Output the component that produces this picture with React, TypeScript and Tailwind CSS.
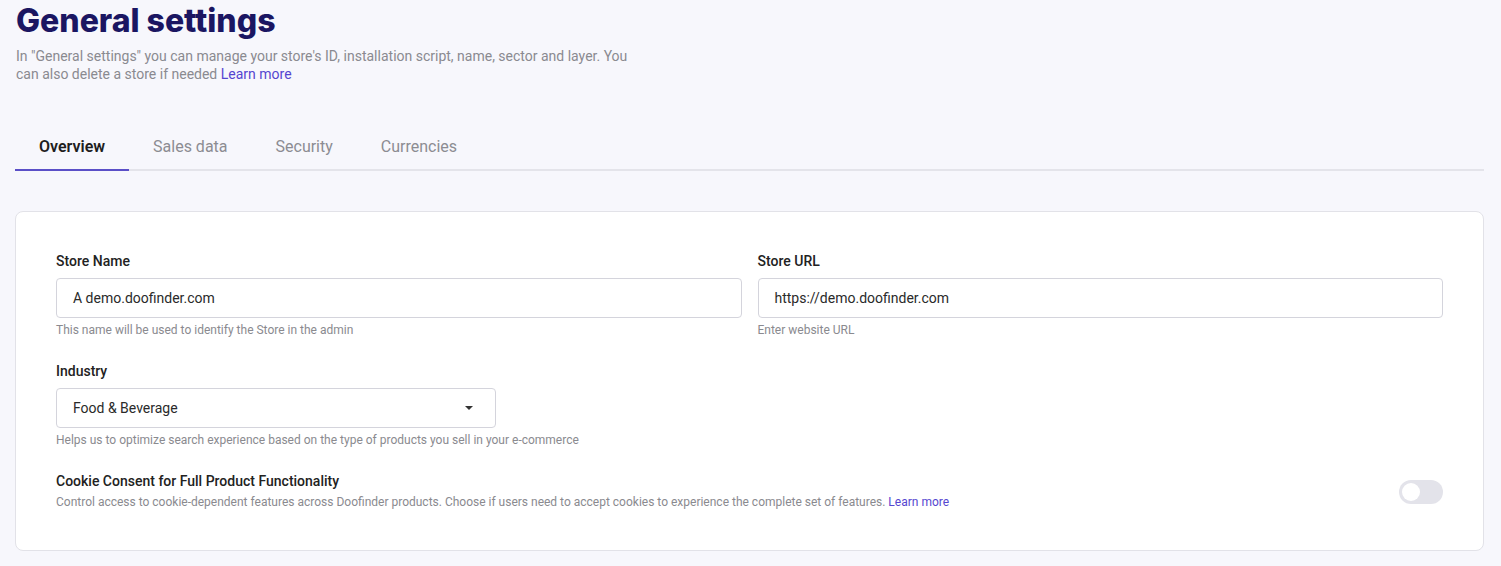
import React, { useState } from 'react';

const tabs = ['Overview', 'Sales data', 'Security', 'Currencies'];

const Field: React.FC<{ label: string; value: string; help: string }> = ({ label, value, help }) => (
  <div className="flex-1">
    <label className="block text-sm font-medium text-[#222] leading-5 mb-[7px]">{label}</label>
    <div className="h-10 border border-[#d4d4dc] rounded-[4px] flex items-center px-4 text-sm text-[#2a2a2a] bg-white">
      {value}
    </div>
    <p className="text-xs text-[#8a8a8f] mt-[4px] leading-4">{help}</p>
  </div>
);

export default function App() {
  const [active, setActive] = useState(0);
  const [cookies, setCookies] = useState(false);

  return (
    <div className="min-h-[566px] bg-[#f7f7fc] font-['Roboto',sans-serif] pl-[15px] pr-[17px] pt-[2px]">
      <h1 className="text-[32px] leading-[38px] font-extrabold text-[#1b1662] font-['Inter',sans-serif] pl-px">
        General settings
      </h1>
      <p className="text-sm leading-[18px] text-[#8a8a90] max-w-[625px] mt-[7px] pl-px">
        In "General settings" you can manage your store's ID, installation script, name, sector and layer. You can also delete a store if needed{' '}
        <a className="text-[#5546d0]">Learn more</a>
      </p>

      <div className="mt-[38px] flex border-b-2 border-[#e4e4ea]">
        {tabs.map((t, i) => (
          <button
            key={t}
            onClick={() => setActive(i)}
            className={`px-6 pt-1 h-[50px] text-base -mb-[2px] border-b-2 ${
              i === active ? 'border-[#5b4fc7] text-[#1e1e1e] font-semibold' : 'border-transparent text-[#8c8c92]'
            }`}
          >
            {t}
          </button>
        ))}
      </div>

      <div className="mt-[40px] bg-white border border-[#e2e2e8] rounded-lg px-10 pt-[39px] pb-[38px]">
        <div className="flex gap-4">
          <Field label="Store Name" value="A demo.doofinder.com" help="This name will be used to identify the Store in the admin" />
          <Field label="Store URL" value="https://demo.doofinder.com" help="Enter website URL" />
        </div>

        <div className="mt-[23px]">
          <label className="block text-sm font-medium text-[#222] leading-5 mb-[7px]">Industry</label>
          <div className="w-[440px] h-10 border border-[#d4d4dc] rounded-[4px] flex items-center justify-between pl-4 pr-[22px] text-sm text-[#2a2a2a]">
            <span>Food &amp; Beverage</span>
            <svg width="8" height="4" viewBox="0 0 8 4">
              <path d="M0 0 L8 0 L4 4 Z" fill="#333" />
            </svg>
          </div>
          <p className="text-xs text-[#8a8a8f] mt-[4px] leading-4">
            Helps us to optimize search experience based on the type of products you sell in your e-commerce
          </p>
        </div>

        <div className="mt-[23px] flex items-center justify-between">
          <div>
            <h3 className="text-sm font-medium text-[#222] leading-5">Cookie Consent for Full Product Functionality</h3>
            <p className="text-xs text-[#8a8a8f] leading-5 mt-px">
              Control access to cookie-dependent features across Doofinder products. Choose if users need to accept cookies to experience the complete set of features.{' '}
              <a className="text-[#5546d0]">Learn more</a>
            </p>
          </div>
          <button
            onClick={() => setCookies(!cookies)}
            className={`w-11 h-6 rounded-full p-[3px] flex items-center ${cookies ? 'bg-[#5b4fc7] justify-end' : 'bg-[#e3e3ea] justify-start'}`}
          >
            <span className="w-[18px] h-[18px] rounded-full bg-white block" />
          </button>
        </div>
      </div>
    </div>
  );
}
